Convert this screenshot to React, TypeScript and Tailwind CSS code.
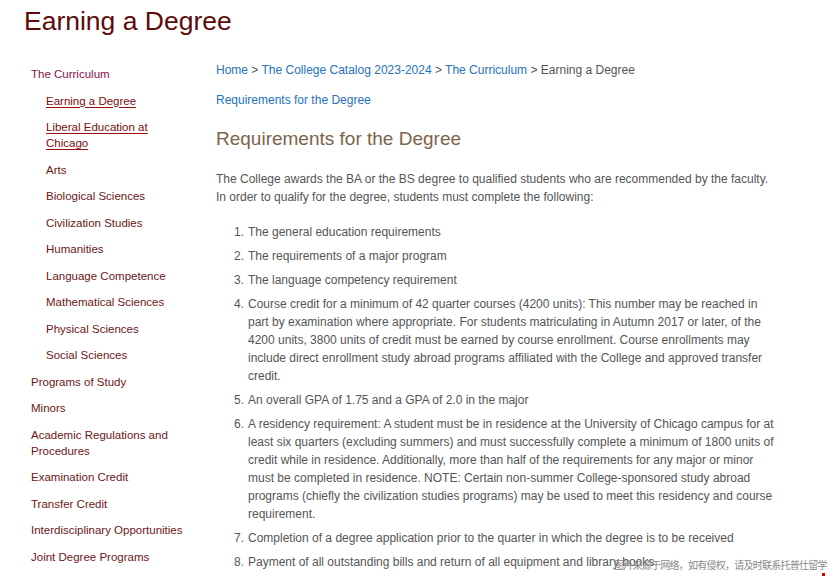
const sideNav = [
  { label: 'The Curriculum', level: 0 },
  { label: 'Earning a Degree', level: 1, current: true },
  { label: 'Liberal Education at Chicago', level: 1, current: true },
  { label: 'Arts', level: 1 },
  { label: 'Biological Sciences', level: 1 },
  { label: 'Civilization Studies', level: 1 },
  { label: 'Humanities', level: 1 },
  { label: 'Language Competence', level: 1 },
  { label: 'Mathematical Sciences', level: 1 },
  { label: 'Physical Sciences', level: 1 },
  { label: 'Social Sciences', level: 1 },
  { label: 'Programs of Study', level: 0 },
  { label: 'Minors', level: 0 },
  { label: 'Academic Regulations and Procedures', level: 0 },
  { label: 'Examination Credit', level: 0 },
  { label: 'Transfer Credit', level: 0 },
  { label: 'Interdisciplinary Opportunities', level: 0 },
  { label: 'Joint Degree Programs', level: 0 },
];

const requirements = [
  'The general education requirements',
  'The requirements of a major program',
  'The language competency requirement',
  'Course credit for a minimum of 42 quarter courses (4200 units): This number may be reached in part by examination where appropriate. For students matriculating in Autumn 2017 or later, of the 4200 units, 3800 units of credit must be earned by course enrollment. Course enrollments may include direct enrollment study abroad programs affiliated with the College and approved transfer credit.',
  'An overall GPA of 1.75 and a GPA of 2.0 in the major',
  'A residency requirement: A student must be in residence at the University of Chicago campus for at least six quarters (excluding summers) and must successfully complete a minimum of 1800 units of credit while in residence. Additionally, more than half of the requirements for any major or minor must be completed in residence. NOTE: Certain non-summer College-sponsored study abroad programs (chiefly the civilization studies programs) may be used to meet this residency and course requirement.',
  'Completion of a degree application prior to the quarter in which the degree is to be received',
  'Payment of all outstanding bills and return of all equipment and library books',
];

export default function App() {
  return (
    <div
      className="relative h-[577px] w-[827px] overflow-hidden bg-white"
      style={{ fontFamily: '"Liberation Sans", Arial, sans-serif' }}
    >
      <h1 className="pl-6 pt-[4px] text-[26.5px] leading-[34px] text-[#5e0b0b]">Earning a Degree</h1>

      <div className="mt-[28px] flex">
        {/* Left nav */}
        <nav className="w-[216px] shrink-0 pl-[31px] pr-[24px]">
          <ul className="flex flex-col">
            {sideNav.map((item) => (
              <li
                key={item.label}
                className={`pb-[10.5px] text-[11.5px] leading-4 ${item.level === 1 ? 'pl-[15px] pr-[12px]' : ''}`}
              >
                <a
                  className={
                    item.current
                      ? 'text-[#7a0d0d] underline decoration-[#a00d0d] underline-offset-2'
                      : item.label === 'The Curriculum'
                        ? 'text-[#8a0f4a]'
                        : 'text-[#6e1616]'
                  }
                >
                  {item.label}
                </a>
              </li>
            ))}
          </ul>
        </nav>

        {/* Main content */}
        <main className="w-[565px] text-[12px] text-[#555]">
          <div className="mt-[-5px] leading-[18px]">
            <a className="text-[#2672b8]">Home</a> &gt;{' '}
            <a className="text-[#2672b8]">The College Catalog 2023-2024</a> &gt;{' '}
            <a className="text-[#2672b8]">The Curriculum</a> &gt; Earning a Degree
          </div>
          <div className="mt-[12px] leading-[18px] text-[#2672b8]">Requirements for the Degree</div>

          <h2 className="mt-[18px] text-[19px] leading-6 text-[#7c6349]">Requirements for the Degree</h2>

          <p className="mt-[19px] leading-[18px]">
            The College awards the BA or the BS degree to qualified students who are recommended by the faculty.
            In order to qualify for the degree, students must complete the following:
          </p>

          <ol className="mt-[17px] flex flex-col gap-[6px] pl-[32px] leading-[18px]">
            {requirements.map((r, i) => (
              <li key={i} className="relative">
                <span className="absolute right-full pr-[4px]">{i + 1}.</span>
                {r}
              </li>
            ))}
          </ol>
        </main>
      </div>

      {/* watermark */}
      <div
        className="absolute left-[614px] top-[560px] whitespace-nowrap text-[10px] leading-none tracking-[-0.75px] text-[#888]"
        style={{ fontFamily: '"Noto Sans CJK SC", sans-serif' }}
      >
        图片来源于网络，如有侵权，请及时联系托普仕留学删除
      </div>
      <div className="absolute left-[822px] top-[573px] h-[3px] w-[3px] bg-[#d00000]" />
    </div>
  );
}
